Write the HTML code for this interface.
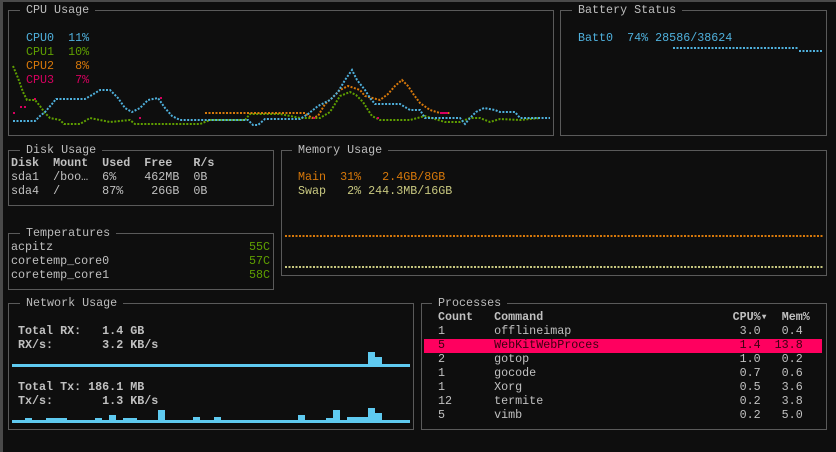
<!DOCTYPE html>
<html><head><meta charset="utf-8"><style>
html,body{margin:0;padding:0}
body{width:836px;height:452px;background:#0e0e0e;position:relative;overflow:hidden;font-family:"Liberation Mono","DejaVu Sans Mono",monospace;font-size:11.7px;line-height:14px;color:#c0c0c0}
.box{position:absolute;border:1px solid #5a5a5a}
.t{position:absolute;white-space:pre;line-height:14px}
.ttl{position:absolute;white-space:pre;background:#0e0e0e;padding:0 6px;color:#bdbdbd;line-height:14px}
b{font-weight:bold}
svg{position:absolute;left:0;top:0}
</style></head><body>
<div style="position:absolute;left:0;top:0;width:3px;height:452px;background:#4a4a4a"></div>
<div style="position:absolute;left:0;top:0;width:836px;height:2px;background:#4a4a4a"></div>

<div class="box" style="left:8px;top:10px;width:544px;height:124px"></div>
<div class="box" style="left:560px;top:10px;width:265px;height:124px"></div>
<div class="box" style="left:8px;top:150px;width:264px;height:54px"></div>
<div class="box" style="left:281px;top:150px;width:544px;height:124px"></div>
<div class="box" style="left:8px;top:233px;width:264px;height:55px"></div>
<div class="box" style="left:8px;top:303px;width:404px;height:125px"></div>
<div class="box" style="left:421px;top:303px;width:404px;height:125px"></div>

<div class="ttl" style="left:20px;top:3px">CPU Usage</div>
<div class="ttl" style="left:572px;top:3px">Battery Status</div>
<div class="ttl" style="left:20px;top:143px">Disk Usage</div>
<div class="ttl" style="left:292px;top:143px">Memory Usage</div>
<div class="ttl" style="left:20px;top:226px">Temperatures</div>
<div class="ttl" style="left:20px;top:296px">Network Usage</div>
<div class="ttl" style="left:432px;top:296px">Processes</div>

<div class="t" style="left:26px;top:31px;color:#4fb0dc">CPU0  11%</div>
<div class="t" style="left:26px;top:45px;color:#5f9f00">CPU1  10%</div>
<div class="t" style="left:26px;top:59px;color:#d7780a">CPU2   8%</div>
<div class="t" style="left:26px;top:73px;color:#d7005f">CPU3   7%</div>

<svg width="836" height="452">
<g fill="none" stroke-width="2" stroke-dasharray="2 1.5">
<polyline stroke="#5f9f00" points="13,66 18,78 23,92 27,100 35,100 40,106 45,113 50,118 60,120 64,124 80,124 90,118 110,122 130,120 135,124 140,124 200,124 210,120 245,120 250,114 280,114 300,118 310,118 320,118 330,112 335,104 340,96 350,92 356,95 363,102 368,110 372,116 380,120 410,120 425,116 445,122 460,122 470,118 480,118 490,122 500,119 520,120 540,118"/>
<polyline stroke="#d7780a" points="205,113 233,113 240,113 280,113 305,113 312,118 318,116 325,104 332,98 340,90 348,86 360,90 365,96 380,100 388,94 395,86 402,80 408,86 414,95 420,103 430,110 440,113 450,113"/>
<polyline stroke="#4fb0dc" points="13,121 35,121 40,116 45,112 52,104 56,99 85,99 92,95 100,90 110,90 118,98 125,108 132,112 140,108 148,100 158,98 165,108 172,116 180,120 248,120 253,125 258,125 265,119 300,119 308,114 318,106 330,100 338,92 345,80 352,70 357,80 365,90 370,98 375,104 400,104 410,110 420,110 425,118 460,118 465,124 470,118 476,112 484,108 495,110 500,112 515,112 520,118 550,118"/>
<line x1="673" y1="48" x2="798" y2="48" stroke="#4fb0dc"/>
<line x1="799" y1="51" x2="823" y2="51" stroke="#4fb0dc"/>
<line x1="285" y1="236" x2="823" y2="236" stroke="#d7780a"/>
<line x1="285" y1="267" x2="823" y2="267" stroke="#c8c880"/>
</g>
<g fill="#d7005f">
<rect x="13" y="112" width="2" height="2"/><rect x="20" y="106" width="2" height="2"/><rect x="24" y="106" width="2" height="2"/><rect x="34" y="98" width="2" height="2"/>
<rect x="160" y="97" width="2" height="2"/><rect x="139" y="117" width="2" height="2"/><rect x="313" y="117" width="2" height="2"/><rect x="377" y="117" width="2" height="2"/>
<rect x="440" y="112" width="8" height="2"/>
</g>
<g fill="#5fcaf0">
<rect x="12" y="364" width="398" height="3"/>
<rect x="368" y="352" width="7" height="13"/><rect x="375" y="357" width="7" height="8"/>
<rect x="12" y="420" width="398" height="3"/>
<rect x="25" y="418" width="7" height="3"/><rect x="46" y="418" width="21" height="3"/>
<rect x="95" y="418" width="7" height="3"/><rect x="109" y="415" width="7" height="6"/>
<rect x="123" y="418" width="14" height="3"/><rect x="158" y="410" width="7" height="11"/>
<rect x="193" y="417" width="7" height="4"/><rect x="214" y="417" width="7" height="4"/>
<rect x="298" y="415" width="7" height="6"/><rect x="326" y="418" width="7" height="3"/>
<rect x="333" y="410" width="7" height="11"/><rect x="347" y="417" width="21" height="4"/>
<rect x="368" y="408" width="7" height="13"/><rect x="375" y="413" width="7" height="8"/>
</g>
</svg>

<div class="t" style="left:578px;top:31px;color:#4fb0dc">Batt0  74% 28586/38624</div>

<div class="t" style="left:11px;top:156px"><b>Disk  Mount  Used  Free   R/s</b>
sda1  /boo…  6%    462MB  0B
sda4  /      87%    26GB  0B</div>

<div class="t" style="left:298px;top:170px;color:#d7780a">Main  31%   2.4GB/8GB</div>
<div class="t" style="left:298px;top:184px;color:#c8c880">Swap   2% 244.3MB/16GB</div>

<div class="t" style="left:11px;top:240px">acpitz
coretemp_core0
coretemp_core1</div>
<div class="t" style="left:249px;top:240px;color:#5f9f00">55C
57C
58C</div>

<div class="t" style="left:18px;top:324px"><b>Total RX:   1.4 GB
RX/s:       3.2 KB/s</b></div>
<div class="t" style="left:18px;top:380px"><b>Total Tx: 186.1 MB
Tx/s:       1.3 KB/s</b></div>

<div style="position:absolute;left:424px;top:339px;width:398px;height:14px;background:#ff005f"></div>
<div class="t" style="left:438px;top:310px"><b>Count   Command                           CPU%▾  Mem%</b>
1       offlineimap                        3.0   0.4
<span style="color:#3a0010">5       WebKitWebProces                    1.4  13.8</span>
2       gotop                              1.0   0.2
1       gocode                             0.7   0.6
1       Xorg                               0.5   3.6
12      termite                            0.2   3.8
5       vimb                               0.2   5.0</div>
</body></html>
